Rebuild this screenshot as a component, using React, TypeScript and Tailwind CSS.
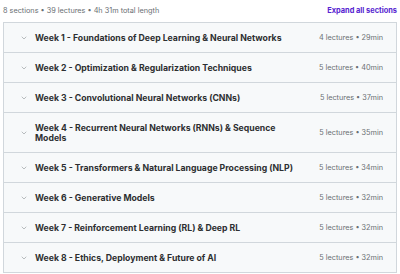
import { ChevronDown } from "lucide-react";

const sections = [
  { title: "Week 1 - Foundations of Deep Learning & Neural Networks", meta: "4 lectures • 29min" },
  { title: "Week 2 - Optimization & Regularization Techniques", meta: "5 lectures • 40min" },
  { title: "Week 3 - Convolutional Neural Networks (CNNs)", meta: "5 lectures • 37min" },
  { title: "Week 4 - Recurrent Neural Networks (RNNs) & Sequence Models", meta: "5 lectures • 35min" },
  { title: "Week 5 - Transformers & Natural Language Processing (NLP)", meta: "5 lectures • 34min" },
  { title: "Week 6 - Generative Models", meta: "5 lectures • 32min" },
  { title: "Week 7 - Reinforcement Learning (RL) & Deep RL", meta: "5 lectures • 32min" },
  { title: "Week 8 - Ethics, Deployment & Future of AI", meta: "5 lectures • 32min" },
];

export default function App() {
  return (
    <div className="w-[400px] h-[274px] bg-white px-[3px] font-['Inter',sans-serif] overflow-hidden">
      <div className="flex items-center justify-between h-[22px] leading-[10px]">
        <span className="text-[7.3px] text-[#6a6f73]">
          8 sections • 39 lectures • 4h 31m total length
        </span>
        <button className="text-[7.4px] font-bold text-[#5624d0] leading-[10px]">Expand all sections</button>
      </div>
      <div className="border border-[#d1d7dc]">
        {sections.map((s) => (
          <div
            key={s.title}
            className="flex items-center bg-[#f7f9fa] border-b border-[#d1d7dc] last:border-b-0 pl-[16px] pr-[13px] py-[9.5px] leading-[10px]"
          >
            <ChevronDown className="size-[8px] text-[#8a8f93] shrink-0" strokeWidth={1.75} />
            <span className="ml-[7px] w-[268px] shrink-0 text-[8.7px] font-bold text-[#2d2f31]">
              {s.title}
            </span>
            <span className="ml-auto text-[7.3px] text-[#6a6f73] whitespace-nowrap">{s.meta}</span>
          </div>
        ))}
      </div>
    </div>
  );
}
